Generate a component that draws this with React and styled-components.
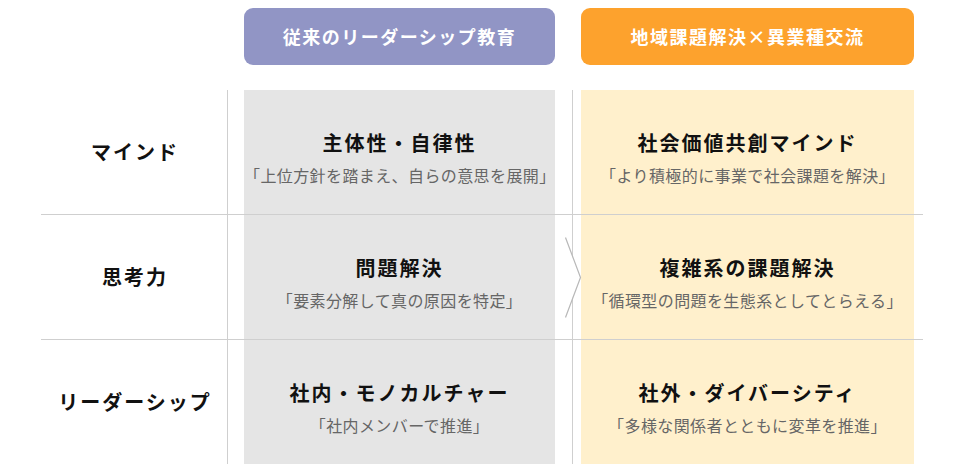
import React from 'react'
import styled, { createGlobalStyle } from 'styled-components'

const GlobalStyle = createGlobalStyle`
    body {
        margin: 0;
        background: #fff;
        font-family: "Noto Sans CJK JP", "Noto Sans", sans-serif;
    }
`

const rows = [
    {
        label: "マインド",
        before: { title: "主体性・自律性", text: "「上位方針を踏まえ、自らの意思を展開」" },
        after: { title: "社会価値共創マインド", text: "「より積極的に事業で社会課題を解決」" },
    },
    {
        label: "思考力",
        before: { title: "問題解決", text: "「要素分解して真の原因を特定」" },
        after: { title: "複雑系の課題解決", text: "「循環型の問題を生態系としてとらえる」" },
        arrow: true,
    },
    {
        label: "リーダーシップ",
        before: { title: "社内・モノカルチャー", text: "「社内メンバーで推進」" },
        after: { title: "社外・ダイバーシティ", text: "「多様な関係者とともに変革を推進」" },
    },
]

function App() {
    return (
        <Page>
            <GlobalStyle />
            <Header>
                <Pill color="#9195c5" col={3}>従来のリーダーシップ教育</Pill>
                <Pill color="#fda22d" col={6}>地域課題解決×異業種交流</Pill>
            </Header>
            <Body>
                {rows.map((r, i) => (
                    <Row key={r.label} last={i === rows.length - 1}>
                        <Label>{r.label}</Label>
                        <Gap line />
                        <Cell bg="#e5e5e5">
                            <Title>{r.before.title}</Title>
                            <Sub>{r.before.text}</Sub>
                        </Cell>
                        <Gap />
                        <Gap line />
                        <Cell bg="#fff0cc">
                            <Title>{r.after.title}</Title>
                            <Sub>{r.after.text}</Sub>
                        </Cell>
                        <Gap />
                        {r.arrow && (
                            <Arrow width="17" height="81" viewBox="0 0 17 81">
                                <polygon points="0,0.5 15.5,40.5 0,80.5" fill="#fff" />
                                <polyline points="0.5,0.5 15.5,40.5 0.5,80.5" fill="none" stroke="#b8b8b8" strokeWidth="1.2" />
                            </Arrow>
                        )}
                    </Row>
                ))}
            </Body>
        </Page>
    )
}

const columns = "186px 17px 311px 17px 9px 333px 9px"

const Page = styled.div`
    width: 972px;
    height: 472px;
    padding: 8px 0 0 41px;
    box-sizing: border-box;
    overflow: hidden;
`

const Header = styled.div`
    display: grid;
    grid-template-columns: ${columns};
    width: 882px;
    height: 57px;
    margin-bottom: 25px;
`

const Pill = styled.div`
    grid-column: ${p => p.col};
    background: ${p => p.color};
    border-radius: 9px;
    display: flex;
    align-items: center;
    justify-content: center;
    color: #fff;
    font-size: 18px;
    font-weight: 700;
    letter-spacing: 1.5px;
    padding-bottom: 2px;
    box-sizing: border-box;
`

const Body = styled.div`
    display: flex;
    flex-direction: column;
    width: 882px;
`

const Row = styled.div`
    position: relative;
    display: grid;
    grid-template-columns: ${columns};
    height: 124px;
    border-bottom: ${p => p.last ? "none" : "1px solid #cfcfcf"};
`

const Label = styled.div`
    display: flex;
    align-items: center;
    justify-content: center;
    font-size: 20px;
    font-weight: 700;
    letter-spacing: 2px;
    color: #111;
    padding-left: 2px;
    padding-bottom: 2px;
`

const Gap = styled.div`
    border-left: ${p => p.line ? "1px solid #cfcfcf" : "none"};
`

const Cell = styled.div`
    background: ${p => p.bg};
    display: flex;
    flex-direction: column;
    align-items: center;
    justify-content: center;
    padding-top: 11px;
    box-sizing: border-box;
`

const Title = styled.div`
    font-size: 20px;
    font-weight: 700;
    letter-spacing: 2px;
    line-height: 28px;
    color: #111;
    margin-bottom: 6px;
`

const Sub = styled.div`
    font-size: 16px;
    letter-spacing: 0.4px;
    line-height: 24px;
    color: #666;
`

const Arrow = styled.svg`
    position: absolute;
    left: 524px;
    top: 22px;
`

export default App
